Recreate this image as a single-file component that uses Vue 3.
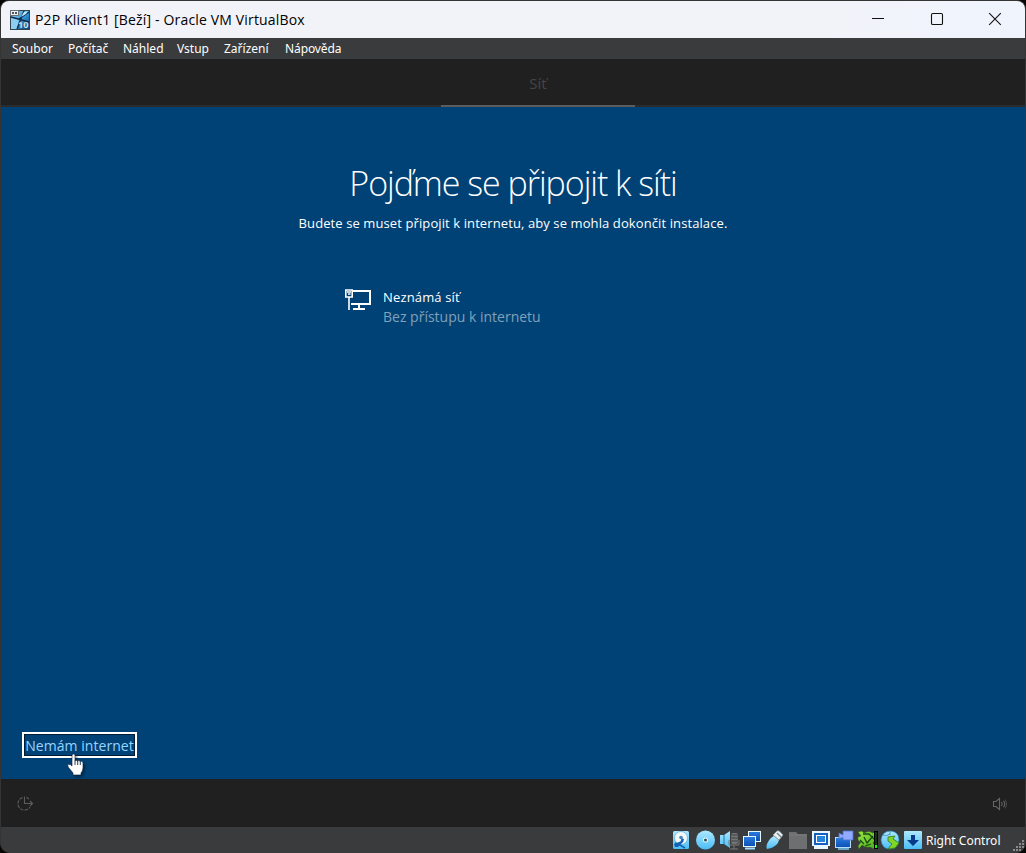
<script setup>
const menus = [
  { label: 'Soubor', cls: 'm1' },
  { label: 'Počítač', cls: 'm2' },
  { label: 'Náhled', cls: 'm3' },
  { label: 'Vstup', cls: 'm4' },
  { label: 'Zařízení', cls: 'm5' },
  { label: 'Nápověda', cls: 'm6' },
]
</script>

<template>
  <div class="desktop">
    <div class="window">
      <header class="titlebar">
        <svg class="appicon" width="20" height="20" viewBox="0 0 20 20">
          <defs>
            <linearGradient id="os" x1="0" y1="0" x2="1" y2="1">
              <stop offset="0" stop-color="#9bdcf8" />
              <stop offset=".55" stop-color="#3292d8" />
              <stop offset="1" stop-color="#063c75" />
            </linearGradient>
          </defs>
          <rect width="20" height="20" fill="#34444f" />
          <rect x="1" y="1" width="18" height="18" fill="url(#os)" />
          <path d="M1 7L9 9L7 19H1Z" fill="#8ccdf3" />
          <path d="M14 1L7 19M1 7L19 12M9 9L19 2" stroke="#102c48" stroke-width="1.3" />
          <path d="M11 7L14 2L18 1L16 4Z" fill="#b9ecff" />
          <rect width="9" height="6" fill="#65747d" />
          <rect x="1" y="1" width="7" height="4" fill="#f0f0f0" />
          <path d="M2 3H4M5 3H7" stroke="#555" stroke-width="2" />
          <text x="8" y="17.5" class="ten">10</text>
        </svg>
        <span class="title">P2P Klient1 [Beží] - Oracle VM VirtualBox</span>
        <div class="controls">
          <svg width="14" height="14" viewBox="0 0 14 14"><path d="M1 6.5H13" /></svg>
          <svg width="14" height="14" viewBox="0 0 14 14"><rect x="1.5" y="1.5" width="11" height="11" rx="1.3" /></svg>
          <svg width="14" height="14" viewBox="0 0 14 14"><path d="M1.2 1.2L12.8 12.8M12.8 1.2L1.2 12.8" /></svg>
        </div>
      </header>
      <nav class="menubar">
        <span v-for="m in menus" :key="m.label" :class="m.cls">{{ m.label }}</span>
      </nav>
      <div class="steps"><div class="step"><span>Síť</span></div></div>
      <main class="setup">
        <h1>Pojďme se připojit k síti</h1>
        <p class="lead">Budete se muset připojit k internetu, aby se mohla dokončit instalace.</p>
        <div class="network">
          <svg width="27" height="22" viewBox="0 0 27 22" fill="none" stroke="#fff" stroke-width="2">
            <path d="M8 2H25V15H6M14 15V19M8 20H20" />
            <path d="M.8 1H7.200V8H.8ZM4 8V21" stroke-width="1.600" />
            <path d="M2 3H6M3 5H5.500" stroke-width="1.500" />
          </svg>
          <div class="nettext">
            <span class="name">Neznámá síť</span>
            <span class="state">Bez přístupu k internetu</span>
          </div>
        </div>
        <a class="skip"><span>Nemám internet</span></a>
        <svg class="cursor" width="22" height="28" viewBox="0 0 22 28">
          <path d="M6 2Q8-.2 9 2V8Q10 6.500 11.500 8Q13 6.700 14.300 8.700Q16.800 7.500 17 10.500V15Q16.800 18 15 20V22H7V20L2.500 14.500Q.8 12 2.800 11.300Q4.500 11 6 13Z" fill="#fff" stroke="#0a1d30" stroke-width=".6" stroke-linejoin="round" />
          <path d="M9 7.500V12M11.700 8V12M14.300 8.800V12" stroke="#122b44" stroke-width=".9" />
        </svg>
      </main>
      <div class="tray">
        <svg width="18" height="18" viewBox="0 0 18 18" fill="none" stroke="#5c5c5c" stroke-width="1.100">
          <path d="M8.500 1.500V8.500H16.500M14 6L16.500 8.500L14 11" />
          <path d="M6.500 2.400A6.500 6.500 0 1 0 14 12" stroke-dasharray="3.500 1.100" />
          <path d="M10.500 2.500L13 4" />
        </svg>
        <svg width="16" height="16" viewBox="0 0 16 16" fill="none" stroke="#646464" stroke-width="1.100">
          <path d="M1.500 5.500H4L7.500 2.500V13.500L4 10.500H1.500ZM9.500 6Q11 8 9.500 10M11.500 4.800Q14 8 11.500 11.200" />
          <path d="M13 3.500Q16 8 13 12.500" stroke="#454545" />
        </svg>
      </div>
      <footer class="status">
        <svg class="devices" width="252" height="22" viewBox="0 0 252 22">
          <defs>
            <linearGradient id="sky" x1="0" y1="0" x2="0" y2="1"><stop stop-color="#aee8ff" /><stop offset="1" stop-color="#49bdf5" /></linearGradient>
            <linearGradient id="blue" x1="0" y1="0" x2="0" y2="1"><stop stop-color="#2b7ce0" /><stop offset="1" stop-color="#0a50b4" /></linearGradient>
            <linearGradient id="leaf" x1="0" y1="0" x2="1" y2="1"><stop stop-color="#9be641" /><stop offset="1" stop-color="#4cae20" /></linearGradient>
          </defs>
          <g>
            <rect x="2" y="2" width="16" height="18" rx="1.500" fill="url(#sky)" />
            <circle cx="10" cy="9" r="6.500" fill="#f4f8fa" stroke="#62aace" stroke-width=".7" />
            <path d="M10 9L13 10Q13 13 10 15L7 18H4L3 15L8 13Q11 12 10 9Z" fill="#1262b5" />
            <path d="M4 14L9 16L14 19" fill="none" stroke="#1262b5" stroke-width="1.500" />
            <circle cx="10" cy="8.500" r="1.800" fill="#4b86b6" />
          </g>
          <circle cx="34.500" cy="11" r="9.500" fill="url(#sky)" />
          <circle cx="34.500" cy="11" r="2.500" fill="#e5fbff" /><circle cx="34.500" cy="11" r="1.500" fill="#294c5c" />
          <path d="M49 6H53L59 2V19L53 15H49Z" fill="url(#sky)" /><path d="M53 6V15" stroke="#2677a8" />
          <rect x="60" y="4" width="7" height="11" rx="2" fill="#737577" /><path d="M60 6H67M60 9H67M60 12H67" stroke="#414345" /><path d="M58 11V16H68V11M63 16V20M59 20H67" fill="none" stroke="#797b7d" />
          <rect x="77.500" y="2.500" width="12" height="10" fill="url(#blue)" stroke="#e5f7ff" /><path d="M83 13V16" stroke="#9edfff" stroke-width="3" />
          <rect x="72.500" y="7.500" width="12" height="10" fill="url(#blue)" stroke="#e5f7ff" /><path d="M74 19.500H84" stroke="#9edfff" stroke-width="2" />
          <path d="M96 20C94 17 98 9 103 7L108 11C107 16 102 19 96 20Z" fill="url(#sky)" /><path d="M102 6L106 2Q108 .8 112 6L108 11Z" fill="#e8eef1" stroke="#85959e" stroke-width=".8" /><path d="M106 4L110 8" stroke="#79858b" stroke-width="1.500" />
          <path d="M118 3H125L127 5H136V20H118Z" fill="#6d6f70" /><path d="M118 6H136" stroke="#7b7d7e" />
          <path d="M141 2H159V17H157V20H143V17H141Z" fill="#e8f6ff" /><rect x="143" y="4" width="14" height="12" fill="#175fbe" /><rect x="145.500" y="6.500" width="9" height="7" fill="#2584dd" stroke="#fff" />
          <rect x="164.500" y="8.500" width="15" height="10" fill="url(#blue)" stroke="#b9dcf8" /><path d="M167 20H178" stroke="#78c9fa" stroke-width="1.500" /><path d="M168 4L172 6V2H182V11H172V8L168 10Z" fill="#91a9ff" stroke="#4972c5" stroke-width=".8" />
          <path d="M187 3L191 2L193 4Q198 1 202 4L205 2V10L202 14L205 18L203 20L199 18Q194 19 191 16L188 20L187 17L190 13Q186 12 187 8L190 7Z" fill="url(#leaf)" stroke="#24600f" stroke-width=".5" /><path d="M193 8L196 14L202 7M189 11L193 15M192 5H198L203 10M194 17L200 15" fill="none" stroke="#184b12" stroke-width="1.300" />
          <rect x="203.500" y="2.500" width="3" height="17" fill="#17330d" stroke="#000" /><rect x="204" y="16" width="2" height="3" fill="#0f0" />
          <path d="M210 11Q211 2 220 2Q228 3 228 11Q227 20 219 20Q211 20 210 11Z" fill="url(#sky)" stroke="#278bc0" stroke-width=".7" /><path d="M212 6Q215 8 219 5M219 2V6" fill="none" stroke="#367f9e" stroke-width=".7" /><path d="M217 8L224 7L222 10L228 14L224 19L217 20L221 15L217 12Z" fill="#80d625" stroke="#2f7812" stroke-width=".8" />
          <rect x="233" y="2" width="18" height="18" rx="1" fill="url(#sky)" /><path d="M240 6H244V11H248L242 17L236 11H240Z" fill="#073b89" />
        </svg>
        <span class="hostkey">Right Control</span>
        <svg class="grip" width="13" height="13" viewBox="0 0 13 13" fill="#8b8b8b">
          <path d="M10 0h2v2h-2zM7 3h2v2h-2zM10 3h2v2h-2zM4 6h2v2h-2zM7 6h2v2h-2zM10 6h2v2h-2zM1 9h2v2h-2zM4 9h2v2h-2zM7 9h2v2h-2z" />
        </svg>
      </footer>
    </div>
  </div>
</template>

<style>
body { background: #080706; overflow: hidden; }
</style>
<style scoped>
* { box-sizing: border-box; }
.desktop { width: 1026px; height: 853px; background: #080706; font-family: "Open Sans", "Noto Sans", sans-serif; }
.window { width: 1026px; height: 853px; border: 1px solid #353535; border-bottom: 0; border-radius: 9px 9px 10px 10px; overflow: hidden; display: flex; flex-direction: column; background: #3a3b3d; }
.titlebar { height: 37px; flex: none; background: linear-gradient(90deg, #f2f3f9 80%, #eff4fd); display: flex; align-items: center; padding: 0 23px 0 9px; color: #000; }
.title { font-size: 14px; margin-left: 5px; white-space: nowrap; letter-spacing: .16px; line-height: 20px; }
.ten { font: bold 9px "Open Sans", sans-serif; fill: #fff; stroke: #365565; stroke-width: .25; }
.controls { margin: -2px 0 0 auto; display: flex; gap: 44.5px; }
.controls svg { fill: none; stroke: #111; stroke-width: 1.1; display: block; }
.menubar { height: 21px; flex: none; background: #3a3b3d; color: #fff; display: flex; padding-left: 11px; font: 12px/22px "Noto Sans", sans-serif; white-space: nowrap; }
.m1 { width: 56px; } .m2 { width: 55px; } .m3 { width: 54px; } .m4 { width: 47px; } .m5 { width: 61px; } .m6 { letter-spacing: -.1px; }
.steps { height: 48px; flex: none; background: #202020; border-bottom: 2px solid #2b2b2b; display: flex; justify-content: center; padding-left: 50px; }
.step { width: 194px; height: 48px; border-bottom: 2px solid #5c5c5c; color: #464646; font-size: 15px; line-height: 49px; text-align: center; }
.setup { height: 672px; flex: none; background: #004275; position: relative; display: flex; flex-direction: column; color: #fff; }
h1 { margin: 52px 0 0; font-size: 34px; line-height: 48px; font-weight: 300; text-align: center; letter-spacing: -1.04px; white-space: nowrap; }
.lead { margin: 6px 0 0; text-align: center; font-size: 13px; line-height: 20px; letter-spacing: .1px; white-space: nowrap; }
.network { display: flex; margin: 56px 0 0 344px; }
.network svg { flex: none; }
.nettext { display: flex; flex-direction: column; margin: -2px 0 0 11px; white-space: nowrap; }
.name { font-size: 13px; line-height: 20px; letter-spacing: .15px; }
.state { font-size: 14px; line-height: 20px; color: #80a1ba; }
.skip { margin: auto 0 21px 21px; width: 115px; height: 26px; border: 2px solid #fff; box-shadow: inset 0 0 0 1px #001c34; color: #99d3ff; font-size: 14px; line-height: 24px; text-align: center; white-space: nowrap; letter-spacing: .05px; }
.cursor { position: absolute; left: 65px; top: 646px; filter: drop-shadow(2px 2px 1px #00182e88); }
.tray { height: 48px; flex: none; background: #202020; display: flex; justify-content: space-between; align-items: center; padding: 1px 17px 0 15px; }
.status { height: 26px; flex: none; background: #3a3b3d; display: flex; align-items: center; padding-left: 670px; color: #fff; }
.devices { flex: none; }
.hostkey { font: 12px/20px "Noto Sans", sans-serif; margin: 2px 0 0 3px; white-space: nowrap; }
.grip { margin: 13px 0 0 auto; flex: none; }
</style>
